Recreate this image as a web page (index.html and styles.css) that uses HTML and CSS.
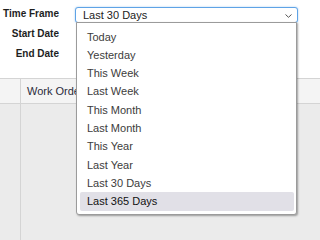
FILE: index.html
```html
<!DOCTYPE html>
<html>
<head>
<meta charset="utf-8">
<link rel="stylesheet" href="styles.css">
</head>
<body>
<div class="form">
  <div class="row">
    <div class="label">Time Frame</div>
    <div class="field select-wrap">
      <div class="select">
        <span class="value">Last 30 Days</span>
        <svg class="chev" width="7" height="4" viewBox="0 0 7 4"><path d="M0.5 0.5 L3.5 3.3 L6.5 0.5" fill="none" stroke="#555" stroke-width="1"/></svg>
      </div>
      <ul class="menu">
        <li>Today</li>
        <li>Yesterday</li>
        <li>This Week</li>
        <li>Last Week</li>
        <li>This Month</li>
        <li>Last Month</li>
        <li>This Year</li>
        <li>Last Year</li>
        <li>Last 30 Days</li>
        <li class="active">Last 365 Days</li>
      </ul>
    </div>
  </div>
  <div class="row">
    <div class="label">Start Date</div>
    <div class="field"></div>
  </div>
  <div class="row">
    <div class="label">End Date</div>
    <div class="field"></div>
  </div>
</div>
<div class="grid">
  <div class="grid-head">
    <div class="cell first"></div>
    <div class="cell">Work Order</div>
  </div>
  <div class="grid-body">
    <div class="col first"></div>
    <div class="col"></div>
  </div>
</div>
</body>
</html>
```
FILE: styles.css
```css
html, body {
  margin: 0;
  padding: 0;
  background: #fff;
  height: 100%;
  overflow: hidden;
}
body {
  font-family: "Liberation Sans", Arial, sans-serif;
  display: flex;
  flex-direction: column;
}
.form {
  padding-top: 3px;
}
.row {
  display: flex;
  align-items: center;
  height: 20px;
  gap: 16px;
}
.label {
  width: 59px;
  text-align: right;
  font-weight: bold;
  font-size: 10px;
  color: #1e1e1e;
}
.field {
  width: 223px;
  height: 16px;
}
.select-wrap {
  position: relative;
  z-index: 2;
  align-self: flex-start;
  margin-top: 4px;
}
.select {
  box-sizing: border-box;
  height: 16px;
  border: 1px solid #5fa3e6;
  border-radius: 3px;
  box-shadow: 0 0 2px rgba(95, 163, 230, 0.6);
  display: flex;
  align-items: center;
  justify-content: space-between;
  padding: 0 5px 0 7px;
  font-size: 11px;
  color: #222;
  background: #fff;
}
.chev {
  display: block;
  margin-top: 1px;
}
.menu {
  position: absolute;
  top: 15px;
  left: 1px;
  width: 221px;
  box-sizing: border-box;
  margin: 0;
  padding: 4.5px 0 3.2px;
  list-style: none;
  background: #fff;
  border: 1px solid #9b9b9b;
  border-radius: 0 0 3px 3px;
  box-shadow: 1px 1px 2px rgba(0, 0, 0, 0.35);
}
.menu li {
  height: 18.33px;
  line-height: 18.33px;
  margin: 0 2px 0 3px;
  padding-left: 7px;
  font-size: 11px;
  color: #3c3c3c;
  border-radius: 2px;
}
.menu li.active {
  background: #e1e0e7;
  color: #111;
}
.grid {
  margin-top: 15px;
  flex: 1;
  display: flex;
  flex-direction: column;
}
.grid-head {
  display: flex;
  height: 24px;
  border-top: 1px solid #d4d4d4;
  border-bottom: 1px solid #d4d4d4;
  background: #f4f4f4;
}
.cell {
  display: flex;
  align-items: center;
  padding-left: 6px;
  font-size: 11px;
  color: #2b2b3b;
  white-space: nowrap;
}
.cell.first {
  width: 20px;
  padding: 0;
  border-right: 1px solid #d4d4d4;
}
.grid-body {
  flex: 1;
  display: flex;
  background: #ebebeb;
}
.col.first {
  width: 20px;
  border-right: 1px solid #d4d4d4;
}
```
